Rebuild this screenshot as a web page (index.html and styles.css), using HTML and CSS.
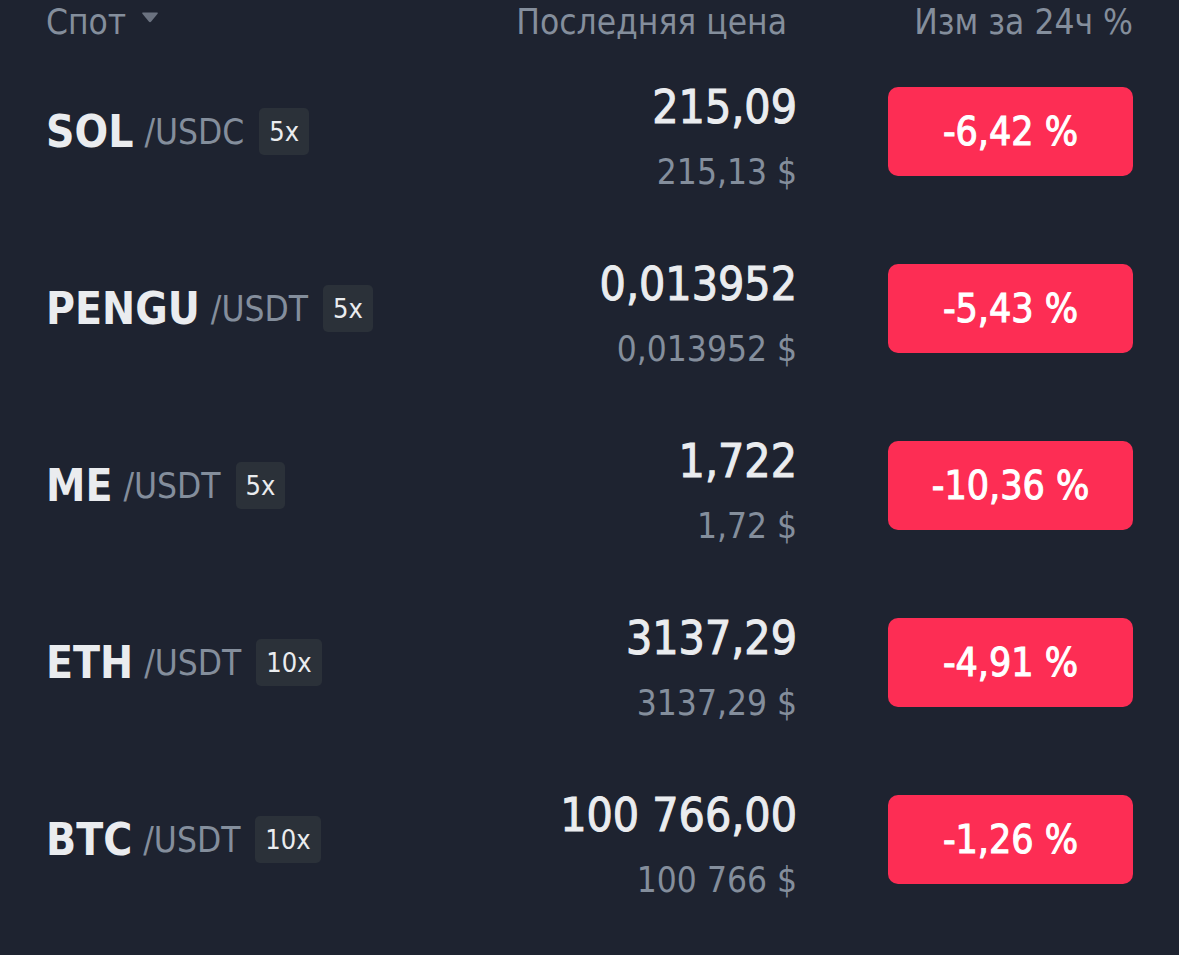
FILE: index.html
```html
<!DOCTYPE html>
<html lang="ru">
<head>
    <meta charset="UTF-8">
    <meta name="viewport" content="width=device-width, initial-scale=1.0">
    <title>Спот</title>
    <link rel="stylesheet" href="styles.css">
</head>
<body>
    <div class="market">
        <div class="head">
            <div class="head-spot">Спот
                <svg class="caret" width="18" height="14" viewBox="0 0 18 14"><path d="M2 2.5 H16 Q17.5 2.5 16.6 3.8 L10.2 11.6 Q9 13 7.8 11.6 L1.4 3.8 Q0.5 2.5 2 2.5 Z" fill="#6b7280"/></svg>
            </div>
            <div class="head-price">Последняя цена</div>
            <div class="head-change">Изм за 24ч %</div>
        </div>

        <div class="row">
            <div class="pair"><span class="base">SOL</span><span class="quote">/USDC</span><span class="lev">5x</span></div>
            <div class="price"><div class="last">215,09</div><div class="usd">215,13 $</div></div>
            <div class="change">-6,42 %</div>
        </div>
        <div class="row">
            <div class="pair"><span class="base">PENGU</span><span class="quote">/USDT</span><span class="lev">5x</span></div>
            <div class="price"><div class="last">0,013952</div><div class="usd">0,013952 $</div></div>
            <div class="change">-5,43 %</div>
        </div>
        <div class="row">
            <div class="pair"><span class="base">ME</span><span class="quote">/USDT</span><span class="lev">5x</span></div>
            <div class="price"><div class="last">1,722</div><div class="usd">1,72 $</div></div>
            <div class="change">-10,36 %</div>
        </div>
        <div class="row">
            <div class="pair"><span class="base">ETH</span><span class="quote">/USDT</span><span class="lev">10x</span></div>
            <div class="price"><div class="last">3137,29</div><div class="usd">3137,29 $</div></div>
            <div class="change">-4,91 %</div>
        </div>
        <div class="row">
            <div class="pair"><span class="base">BTC</span><span class="quote">/USDT</span><span class="lev">10x</span></div>
            <div class="price"><div class="last">100 766,00</div><div class="usd">100 766 $</div></div>
            <div class="change">-1,26 %</div>
        </div>
    </div>
</body>
</html>
```

FILE: styles.css
```css
body { margin: 0; background: #1e2330; font-family: "DejaVu Sans Condensed", "DejaVu Sans", sans-serif; color: #eaecef; }
.market { padding: 0 46px; }
.head, .row { display: grid; grid-template-columns: 1fr auto 245px; column-gap: 91px; align-items: center; }
.head { height: 43px; font-size: 35px; color: #848e9c; }
.head-spot { display: flex; align-items: center; gap: 15px; }
.caret { margin-top: -10px; }
.head-price { text-align: right; padding-right: 10px; }
.head-change { text-align: right; }
.row { height: 177px; }
.pair { display: flex; align-items: center; }
.base { font-size: 44px; font-weight: bold; color: #eaecef; margin-right: 11px; }
.quote { font-size: 35px; color: #848e9c; margin-right: 15px; }
.lev { background: #2b3139; border-radius: 5px; padding: 0 10px; height: 47px; line-height: 47px; font-size: 27px; color: #eaecef; }
.price { text-align: right; padding-top: 12px; }
.last { font-size: 46px; line-height: 46px; -webkit-text-stroke: 1px #eaecef; }
.usd { font-size: 35px; color: #848e9c; line-height: 40px; margin-top: 22px; }
.change { background: #fd2d54; color: #fff; border-radius: 10px; height: 89px; line-height: 89px; text-align: center; font-size: 39px; -webkit-text-stroke: 1px #fff; }
```
